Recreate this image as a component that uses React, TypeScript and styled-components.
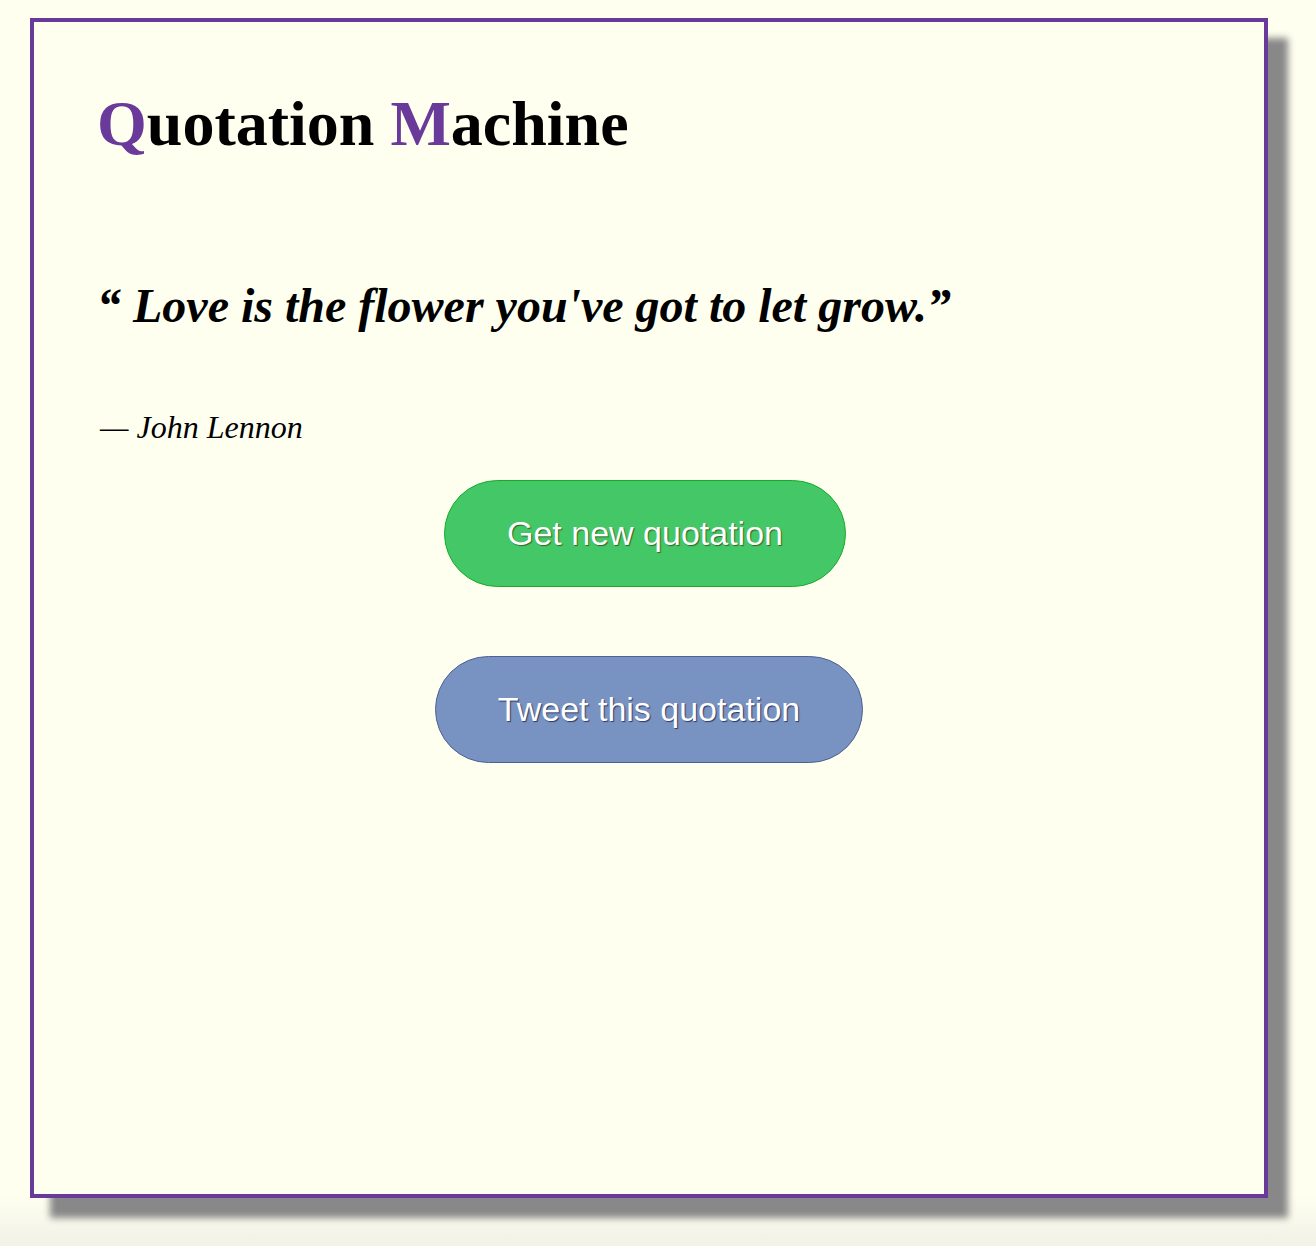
import React from "react";
import styled, { createGlobalStyle } from "styled-components";

const GlobalStyle = createGlobalStyle`
  html {
    min-height: 100%;
    background: linear-gradient(to bottom, #fffff0 0, #fffff0 1196px, #f3f3e8 1236px, #f3f3e8 100%);
  }
  body {
    margin: 0;
    font-family: "Liberation Serif", "Times New Roman", serif;
    color: #000;
  }
`;

const Page = styled.div`
  padding: 18px 48px 48px 30px;
`;

const Card = styled.main`
  box-sizing: border-box;
  height: 1180px;
  border: 4px solid #6a3a9a;
  background: #fffff0;
  box-shadow: 20px 20px 7px #888;
  padding: 66px 63px 0 63px;
  display: flex;
  flex-direction: column;
`;

const Title = styled.h1`
  margin: 0;
  font-size: 64px;
  line-height: 72px;
  font-weight: bold;
`;

const Initial = styled.span`
  color: #6a3a9a;
`;

const Quote = styled.p`
  margin: 118px 0 0 0;
  font-size: 48px;
  line-height: 56px;
  font-weight: bold;
  font-style: italic;
`;

const Author = styled.p`
  margin: 74px 0 0 3px;
  font-size: 32px;
  line-height: 38px;
  font-style: italic;
`;

const Actions = styled.div`
  margin-top: 34px;
  display: flex;
  flex-direction: column;
  align-items: center;
  gap: 69px;
`;

const PillButton = styled.button<{ $bg: string; $border: string; $shadow: string; $shift?: number }>`
  font-family: "Liberation Sans", Arial, sans-serif;
  font-size: 34px;
  line-height: 39px;
  padding: 33px 62px;
  margin-right: ${(p) => (p.$shift ?? 0) * 2}px;
  color: #fff;
  background: ${(p) => p.$bg};
  border: 1px solid ${(p) => p.$border};
  border-radius: 54px;
  text-shadow: 1px 1px 1px ${(p) => p.$shadow};
  cursor: pointer;
`;

export default function App() {
  return (
    <>
      <GlobalStyle />
      <Page>
        <Card>
          <Title>
            <Initial>Q</Initial>uotation <Initial>M</Initial>achine
          </Title>
          <Quote>“ Love is the flower you've got to let grow.”</Quote>
          <Author>— John Lennon</Author>
          <Actions>
            <PillButton $bg="#44c767" $border="#18ab29" $shadow="#2f6627" $shift={4}>
              Get new quotation
            </PillButton>
            <PillButton $bg="#7892c2" $border="#4e6096" $shadow="#283966">
              Tweet this quotation
            </PillButton>
          </Actions>
        </Card>
      </Page>
    </>
  );
}
